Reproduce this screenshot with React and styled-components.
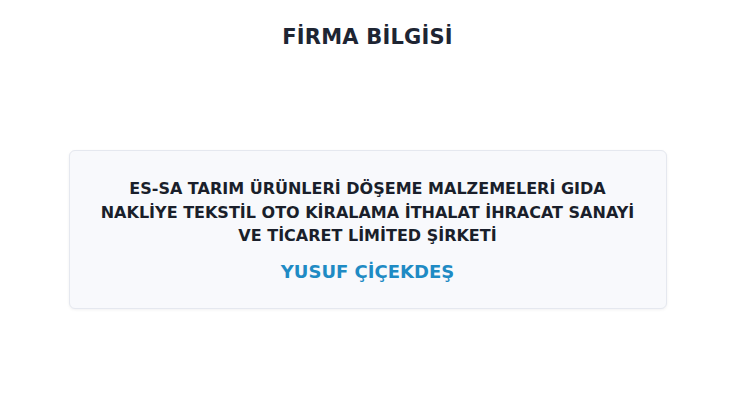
import React from 'react'
import styled, { createGlobalStyle } from 'styled-components'

const GlobalStyle = createGlobalStyle`
  html, body {
    margin: 0;
    padding: 0;
    background: #ffffff;
  }
  body {
    font-family: 'DejaVu Sans', 'Noto Sans', sans-serif;
  }
`

const Page = styled.div`
  width: 735px;
  height: 420px;
  display: flex;
  flex-direction: column;
  align-items: center;
`

const Title = styled.h1`
  margin: 24px 0 0;
  font-size: 21px;
  line-height: 26px;
  font-weight: 700;
  color: #1e2533;
  letter-spacing: 0.2px;
`

const Card = styled.section`
  margin-top: 100px;
  width: 598px;
  box-sizing: border-box;
  padding: 26px 20px 24px;
  background: #f8f9fc;
  border: 1px solid #e5e8ef;
  border-radius: 6px;
  box-shadow: 0 1px 3px rgba(15, 23, 42, 0.06);
  display: flex;
  flex-direction: column;
  align-items: center;
  text-align: center;
`

const CompanyName = styled.p`
  margin: 0;
  font-size: 16px;
  line-height: 23.5px;
  font-weight: 700;
  color: #1a1f2b;
`

const Owner = styled.p`
  margin: 12px 0 0;
  font-size: 18px;
  line-height: 24px;
  font-weight: 700;
  color: #1f8bc4;
`

export default function App() {
  return (
    <>
      <GlobalStyle />
      <Page>
        <Title>FİRMA BİLGİSİ</Title>
        <Card>
          <CompanyName>
            ES-SA TARIM ÜRÜNLERİ DÖŞEME MALZEMELERİ GIDA
            <br />
            NAKLİYE TEKSTİL OTO KİRALAMA İTHALAT İHRACAT SANAYİ
            <br />
            VE TİCARET LİMİTED ŞİRKETİ
          </CompanyName>
          <Owner>YUSUF ÇİÇEKDEŞ</Owner>
        </Card>
      </Page>
    </>
  )
}
